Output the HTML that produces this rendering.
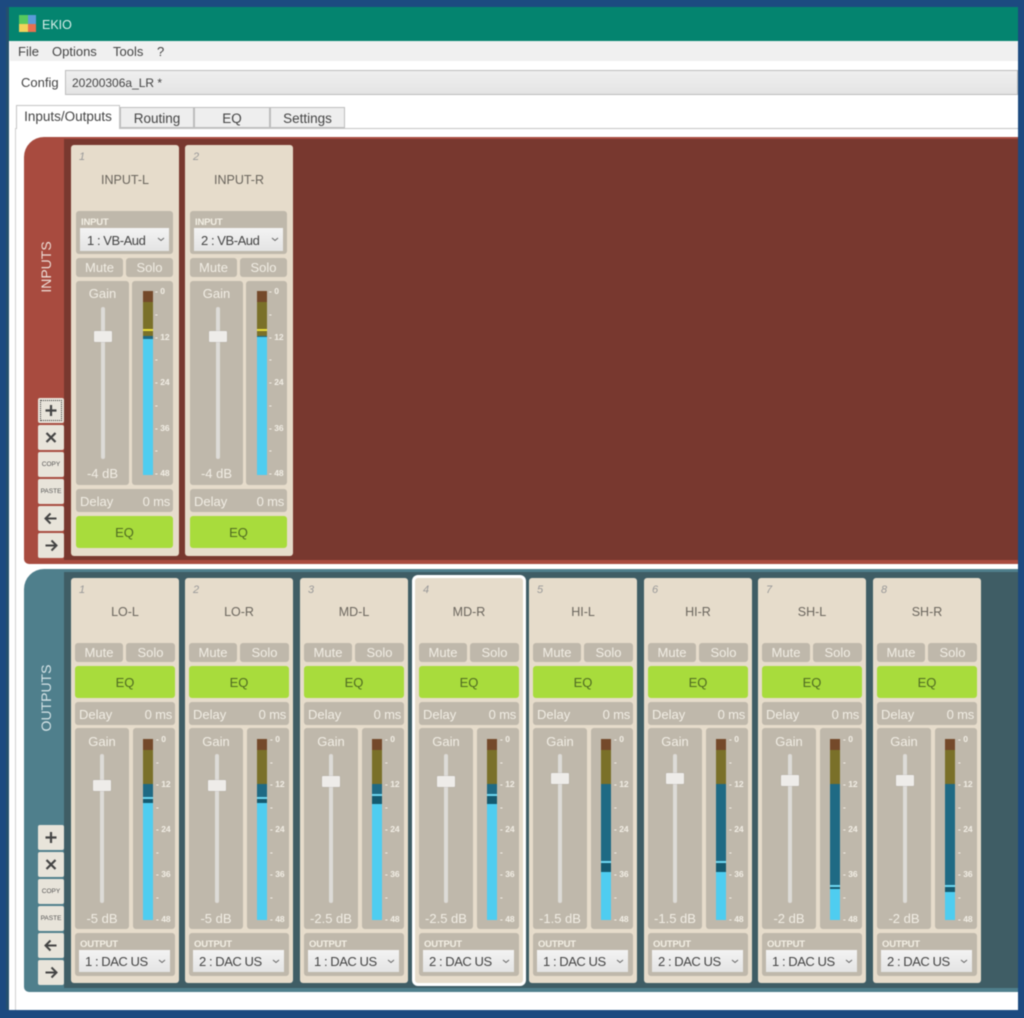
<!DOCTYPE html>
<html><head><meta charset="utf-8"><title>EKIO</title>
<style>
*{box-sizing:border-box}
html,body{margin:0;padding:0;width:1024px;height:1018px;overflow:hidden;background:#1c4a80}
body{font-family:"Liberation Sans",sans-serif;color:#555}
#r{position:absolute;left:0;top:0;width:1024px;height:1018px;overflow:hidden;filter:blur(.4px);background:#1c4a80}
#r div,#r span{position:absolute;white-space:nowrap}
.c{border-radius:3px;background:#e6dccb;width:108px}
.g{background:#bfb8ab;border-radius:3px}
.w{color:#f1ede4;font-size:13px;text-align:center;line-height:19px}
.g.w{line-height:20px}
.g.w span{margin-top:1px;letter-spacing:-.2px}
.g.w span:first-child{font-size:13px!important;letter-spacing:0}
.num{left:8px;top:6px;font:italic 11px "Liberation Sans",sans-serif;color:#999}
.tt{left:0;width:108px;text-align:center;font-size:12.5px;color:#6b665e;line-height:16px;margin-top:1px}
.eq{background:#a8dc3c;border-radius:3px;text-align:center;color:#4f6b22;font-size:13px;line-height:34px}
.sel{background:linear-gradient(#f3f3f3,#e4e4e4);font-size:13px;color:#444;padding:0}
.sel span{margin-top:1px;letter-spacing:-.45px}
.sel svg{position:absolute}
.lab{color:#f3efe4;font-size:9.5px;font-weight:bold;letter-spacing:-.2px;line-height:11px;margin-top:1px}
.tr{width:4px;background:#dddbd7;border-radius:2px}
.th{width:18px;height:11px;background:#eeece9;border-radius:1px;box-shadow:0 0 1px #999}
.bar{width:10px;background:#1f6a84}
.br{left:0;top:0;width:100%;height:11px;background:#74492a}
.ol{left:0;top:11px;width:100%;background:#7a7029}
.bl{left:0;bottom:0;width:100%;background:#4fcdf0}
.pk{left:0;width:100%;height:2px;background:#6fd8f2}
.dk{left:0;width:100%;background:#155a70}
#r .sc{white-space:pre;font-size:8.5px;font-weight:bold;color:#f2eee5;left:23px}
.btn{left:38px;width:26px;height:25px;background:#e8e4da;border-radius:2px}
.btn svg{position:absolute;left:0;top:0}
.sm{font-size:6.5px;color:#555;text-align:center;width:26px;line-height:25px;left:0;top:0}
.tab{top:107px;height:21px;background:#eeeeee;border:1px solid #bdbdbd;text-align:center;font-size:13.5px;color:#444;line-height:21px}
.mn{top:44px;font-size:13px;color:#444;line-height:16px}
</style></head><body><div id="r">

<div style="left:6px;top:7px;width:3px;height:1003px;background:#24506e"></div>
<div style="left:9px;top:7px;width:1009px;height:1003px;background:#fff"></div>
<div style="left:9px;top:7px;width:1009px;height:34px;background:#04846f"></div>
<div style="left:19px;top:15px;width:9px;height:9px;background:#57c95e"></div>
<div style="left:28px;top:15px;width:8px;height:9px;background:#5b9bd8"></div>
<div style="left:19px;top:24px;width:9px;height:8px;background:#f2d35a"></div>
<div style="left:28px;top:24px;width:8px;height:8px;background:#e8704f"></div>
<div style="left:42px;top:17px;font-size:12.5px;color:#d8efea;line-height:16px">EKIO</div>
<div style="left:10px;top:41px;width:1008px;height:20px;background:#f0f0f0"></div>
<div class="mn" style="left:18px">File</div>
<div class="mn" style="left:52px">Options</div>
<div class="mn" style="left:113px">Tools</div>
<div class="mn" style="left:157px">?</div>
<div style="left:21px;top:75px;font-size:13px;color:#444;line-height:16px">Config</div>
<div style="left:65px;top:70px;width:953px;height:25px;background:linear-gradient(#efefef,#e4e4e4);border:1px solid #bdbdbd"></div>
<div style="left:72px;top:75px;font-size:12px;color:#444;line-height:16px">20200306a_LR *</div>

<div style="left:16px;top:128px;width:1002px;height:1px;background:#c4c4c4"></div>
<div style="left:15px;top:128px;width:1px;height:882px;background:#d0d0d0"></div>
<div class="tab" style="left:120px;width:74px">Routing</div>
<div class="tab" style="left:194px;width:76px">EQ</div>
<div class="tab" style="left:270px;width:75px">Settings</div>
<div style="left:16px;top:105px;width:104px;height:24px;background:#fff;border:1px solid #c4c4c4;border-bottom:0;text-align:center;font-size:13.5px;color:#444;line-height:22px">Inputs/Outputs</div>

<!-- INPUTS panel -->
<div style="left:24px;top:137px;width:994px;height:427px;background:#a84b3f;border-radius:20px 0 0 5px"></div>
<div style="left:64px;top:139px;width:954px;height:421px;background:#78382f"></div>
<div style="left:46px;top:267px;transform:translate(-50%,-50%) rotate(-90deg);font-size:14px;color:#ecdcd5;line-height:16px">INPUTS</div>

<div class="btn" style="top:398px;outline:1px dotted #333;outline-offset:-3px"><svg width="26" height="25"><path d="M13 7v11M7.500 12.500h11" stroke="#444" stroke-width="2.200" fill="none"/></svg></div>
<div class="btn" style="top:425px"><svg width="26" height="25"><path d="M8.500 8l9 9M17.500 8l-9 9" stroke="#444" stroke-width="2.200" fill="none"/></svg></div>
<div class="btn" style="top:452px"><span class="sm">COPY</span></div>
<div class="btn" style="top:479px"><span class="sm">PASTE</span></div>
<div class="btn" style="top:506px"><svg width="26" height="25"><path d="M18.500 12.500h-11M12.500 7.500l-5 5 5 5" stroke="#444" stroke-width="2" fill="none"/></svg></div>
<div class="btn" style="top:533px"><svg width="26" height="25"><path d="M7.500 12.500h11M13.500 7.500l5 5-5 5" stroke="#444" stroke-width="2" fill="none"/></svg></div>

<!-- input 1 -->
<div class="c" style="left:71px;top:145px;height:411px">
<div class="num">1</div><div class="tt" style="top:26px">INPUT-L</div>
<div class="g" style="left:5px;top:66px;width:97px;height:43px"></div>
<div class="lab" style="left:10px;top:71px">INPUT</div>
<div class="sel" style="left:9px;top:83px;width:89px;height:23px"><span style="left:7px;top:4px;line-height:15px">1 : VB-Aud</span><svg style="left:77px;top:9px" width="8" height="5"><path d="M1 1l3 2.500L7 1" stroke="#666" fill="none"/></svg></div>
<div class="g w" style="left:5px;top:113px;width:47px;height:19px">Mute</div>
<div class="g w" style="left:55px;top:113px;width:47px;height:19px">Solo</div>
<div class="g" style="left:5px;top:136px;width:53px;height:204px"></div>
<div class="w" style="left:5px;top:139px;width:53px">Gain</div>
<div class="tr" style="left:30px;top:162px;height:152px"></div>
<div class="th" style="left:23px;top:186px"></div>
<div class="w" style="left:5px;top:319px;width:53px">-4 dB</div>
<div class="g" style="left:61px;top:136px;width:41px;height:204px">
<div class="bar" style="left:11px;top:10px;height:184px"><div class="br"></div><div class="ol" style="height:34px"></div><div class="pk" style="top:38px;background:#e8dc3c"></div><div class="bl" style="height:136px"></div></div>
<div class="sc" style="top:-1px;line-height:22.75px">- 0
-
- 12
-
- 24
-
- 36
-
- 48</div></div>
<div class="g w" style="left:5px;top:344px;width:97px;height:23px"><span style="left:4px;top:2px">Delay</span><span style="right:3px;top:2px">0 ms</span></div>
<div class="eq" style="left:5px;top:371px;width:97px;height:32px">EQ</div>
</div>

<!-- input 2 -->
<div class="c" style="left:185px;top:145px;height:411px">
<div class="num">2</div><div class="tt" style="top:26px">INPUT-R</div>
<div class="g" style="left:5px;top:66px;width:97px;height:43px"></div>
<div class="lab" style="left:10px;top:71px">INPUT</div>
<div class="sel" style="left:9px;top:83px;width:89px;height:23px"><span style="left:7px;top:4px;line-height:15px">2 : VB-Aud</span><svg style="left:77px;top:9px" width="8" height="5"><path d="M1 1l3 2.500L7 1" stroke="#666" fill="none"/></svg></div>
<div class="g w" style="left:5px;top:113px;width:47px;height:19px">Mute</div>
<div class="g w" style="left:55px;top:113px;width:47px;height:19px">Solo</div>
<div class="g" style="left:5px;top:136px;width:53px;height:204px"></div>
<div class="w" style="left:5px;top:139px;width:53px">Gain</div>
<div class="tr" style="left:31px;top:162px;height:152px"></div>
<div class="th" style="left:24px;top:186px"></div>
<div class="w" style="left:5px;top:319px;width:53px">-4 dB</div>
<div class="g" style="left:61px;top:136px;width:41px;height:204px">
<div class="bar" style="left:11px;top:10px;height:184px"><div class="br"></div><div class="ol" style="height:34px"></div><div class="pk" style="top:38px;background:#e8dc3c"></div><div class="bl" style="height:138px"></div></div>
<div class="sc" style="top:-1px;line-height:22.75px">- 0
-
- 12
-
- 24
-
- 36
-
- 48</div></div>
<div class="g w" style="left:5px;top:344px;width:97px;height:23px"><span style="left:4px;top:2px">Delay</span><span style="right:3px;top:2px">0 ms</span></div>
<div class="eq" style="left:5px;top:371px;width:97px;height:32px">EQ</div>
</div>

<!-- OUTPUTS panel -->
<div style="left:24px;top:569px;width:994px;height:423px;background:#4f7f8c;border-radius:20px 0 0 5px"></div>
<div style="left:64px;top:572px;width:954px;height:416px;background:#3f5d65"></div>
<div style="left:46px;top:698px;transform:translate(-50%,-50%) rotate(-90deg);font-size:14px;color:#d5e3e6;line-height:16px">OUTPUTS</div>

<div class="btn" style="top:825px"><svg width="26" height="25"><path d="M13 7v11M7.500 12.500h11" stroke="#444" stroke-width="2.200" fill="none"/></svg></div>
<div class="btn" style="top:852px"><svg width="26" height="25"><path d="M8.500 8l9 9M17.500 8l-9 9" stroke="#444" stroke-width="2.200" fill="none"/></svg></div>
<div class="btn" style="top:879px"><span class="sm">COPY</span></div>
<div class="btn" style="top:906px"><span class="sm">PASTE</span></div>
<div class="btn" style="top:933px"><svg width="26" height="25"><path d="M18.500 12.500h-11M12.500 7.500l-5 5 5 5" stroke="#444" stroke-width="2" fill="none"/></svg></div>
<div class="btn" style="top:960px"><svg width="26" height="25"><path d="M7.500 12.500h11M13.500 7.500l5 5-5 5" stroke="#444" stroke-width="2" fill="none"/></svg></div>

<!-- output 1 -->
<div class="c" style="left:71px;top:578px;height:405px">
<div class="num">1</div><div class="tt" style="top:25px">LO-L</div>
<div class="g w" style="left:4px;top:65px;width:48px;height:19px">Mute</div><div class="g w" style="left:55px;top:65px;width:49px;height:19px">Solo</div>
<div class="eq" style="left:4px;top:88px;width:100px;height:32px">EQ</div>
<div class="g w" style="left:4px;top:124px;width:100px;height:23px"><span style="left:4px;top:2px">Delay</span><span style="right:3px;top:2px">0 ms</span></div>
<div class="g" style="left:4px;top:150px;width:54px;height:201px"></div>
<div class="w" style="left:4px;top:154px;width:54px">Gain</div>
<div class="tr" style="left:29px;top:176px;height:149px"></div><div class="th" style="left:22px;top:202px"></div>
<div class="w" style="left:4px;top:331px;width:54px">-5 dB</div>
<div class="g" style="left:62px;top:150px;width:42px;height:201px">
<div class="bar" style="left:10px;top:11px;height:181px"><div class="br"></div><div class="ol" style="height:34px"></div><div class="dk" style="top:60px;height:5px"></div><div class="pk" style="top:58px"></div><div class="bl" style="height:117px"></div></div>
<div class="sc" style="top:0;line-height:22.5px">- 0
-
- 12
-
- 24
-
- 36
-
- 48</div></div>
<div class="g" style="left:4px;top:355px;width:100px;height:43px"></div>
<div class="lab" style="left:9px;top:360px">OUTPUT</div>
<div class="sel" style="left:8px;top:372px;width:91px;height:22px"><span style="left:6px;top:3px;line-height:15px">1 : DAC US</span><svg style="left:79px;top:9px" width="8" height="5"><path d="M1 1l3 2.500L7 1" stroke="#666" fill="none"/></svg></div>
</div>

<!-- output 2 -->
<div class="c" style="left:185px;top:578px;height:405px">
<div class="num">2</div><div class="tt" style="top:25px">LO-R</div>
<div class="g w" style="left:4px;top:65px;width:48px;height:19px">Mute</div><div class="g w" style="left:55px;top:65px;width:49px;height:19px">Solo</div>
<div class="eq" style="left:4px;top:88px;width:100px;height:32px">EQ</div>
<div class="g w" style="left:4px;top:124px;width:100px;height:23px"><span style="left:4px;top:2px">Delay</span><span style="right:3px;top:2px">0 ms</span></div>
<div class="g" style="left:4px;top:150px;width:54px;height:201px"></div>
<div class="w" style="left:4px;top:154px;width:54px">Gain</div>
<div class="tr" style="left:30px;top:176px;height:149px"></div><div class="th" style="left:23px;top:202px"></div>
<div class="w" style="left:4px;top:331px;width:54px">-5 dB</div>
<div class="g" style="left:62px;top:150px;width:42px;height:201px">
<div class="bar" style="left:10px;top:11px;height:181px"><div class="br"></div><div class="ol" style="height:34px"></div><div class="dk" style="top:60px;height:5px"></div><div class="pk" style="top:58px"></div><div class="bl" style="height:117px"></div></div>
<div class="sc" style="top:0;line-height:22.5px">- 0
-
- 12
-
- 24
-
- 36
-
- 48</div></div>
<div class="g" style="left:4px;top:355px;width:100px;height:43px"></div>
<div class="lab" style="left:9px;top:360px">OUTPUT</div>
<div class="sel" style="left:8px;top:372px;width:91px;height:22px"><span style="left:6px;top:3px;line-height:15px">2 : DAC US</span><svg style="left:79px;top:9px" width="8" height="5"><path d="M1 1l3 2.500L7 1" stroke="#666" fill="none"/></svg></div>
</div>

<!-- output 3 -->
<div class="c" style="left:300px;top:578px;height:405px">
<div class="num">3</div><div class="tt" style="top:25px">MD-L</div>
<div class="g w" style="left:4px;top:65px;width:48px;height:19px">Mute</div><div class="g w" style="left:55px;top:65px;width:49px;height:19px">Solo</div>
<div class="eq" style="left:4px;top:88px;width:100px;height:32px">EQ</div>
<div class="g w" style="left:4px;top:124px;width:100px;height:23px"><span style="left:4px;top:2px">Delay</span><span style="right:3px;top:2px">0 ms</span></div>
<div class="g" style="left:4px;top:150px;width:54px;height:201px"></div>
<div class="w" style="left:4px;top:154px;width:54px">Gain</div>
<div class="tr" style="left:29px;top:176px;height:149px"></div><div class="th" style="left:22px;top:198px"></div>
<div class="w" style="left:4px;top:331px;width:54px">-2.5 dB</div>
<div class="g" style="left:62px;top:150px;width:42px;height:201px">
<div class="bar" style="left:10px;top:11px;height:181px"><div class="br"></div><div class="ol" style="height:34px"></div><div class="dk" style="top:57px;height:8px"></div><div class="pk" style="top:55px"></div><div class="bl" style="height:116px"></div></div>
<div class="sc" style="top:0;line-height:22.5px">- 0
-
- 12
-
- 24
-
- 36
-
- 48</div></div>
<div class="g" style="left:4px;top:355px;width:100px;height:43px"></div>
<div class="lab" style="left:9px;top:360px">OUTPUT</div>
<div class="sel" style="left:8px;top:372px;width:91px;height:22px"><span style="left:6px;top:3px;line-height:15px">1 : DAC US</span><svg style="left:79px;top:9px" width="8" height="5"><path d="M1 1l3 2.500L7 1" stroke="#666" fill="none"/></svg></div>
</div>

<!-- output 4 selected -->
<div class="c" style="left:415px;top:578px;height:405px;box-shadow:0 0 0 3px #fff">
<div class="num">4</div><div class="tt" style="top:25px">MD-R</div>
<div class="g w" style="left:4px;top:65px;width:48px;height:19px">Mute</div><div class="g w" style="left:55px;top:65px;width:49px;height:19px">Solo</div>
<div class="eq" style="left:4px;top:88px;width:100px;height:32px">EQ</div>
<div class="g w" style="left:4px;top:124px;width:100px;height:23px"><span style="left:4px;top:2px">Delay</span><span style="right:3px;top:2px">0 ms</span></div>
<div class="g" style="left:4px;top:150px;width:54px;height:201px"></div>
<div class="w" style="left:4px;top:154px;width:54px">Gain</div>
<div class="tr" style="left:29px;top:176px;height:149px"></div><div class="th" style="left:22px;top:198px"></div>
<div class="w" style="left:4px;top:331px;width:54px">-2.5 dB</div>
<div class="g" style="left:62px;top:150px;width:42px;height:201px">
<div class="bar" style="left:10px;top:11px;height:181px"><div class="br"></div><div class="ol" style="height:34px"></div><div class="dk" style="top:57px;height:8px"></div><div class="pk" style="top:55px"></div><div class="bl" style="height:116px"></div></div>
<div class="sc" style="top:0;line-height:22.5px">- 0
-
- 12
-
- 24
-
- 36
-
- 48</div></div>
<div class="g" style="left:4px;top:355px;width:100px;height:43px"></div>
<div class="lab" style="left:9px;top:360px">OUTPUT</div>
<div class="sel" style="left:8px;top:372px;width:91px;height:22px"><span style="left:6px;top:3px;line-height:15px">2 : DAC US</span><svg style="left:79px;top:9px" width="8" height="5"><path d="M1 1l3 2.500L7 1" stroke="#666" fill="none"/></svg></div>
</div>

<!-- output 5 -->
<div class="c" style="left:529px;top:578px;height:405px">
<div class="num">5</div><div class="tt" style="top:25px">HI-L</div>
<div class="g w" style="left:4px;top:65px;width:48px;height:19px">Mute</div><div class="g w" style="left:55px;top:65px;width:49px;height:19px">Solo</div>
<div class="eq" style="left:4px;top:88px;width:100px;height:32px">EQ</div>
<div class="g w" style="left:4px;top:124px;width:100px;height:23px"><span style="left:4px;top:2px">Delay</span><span style="right:3px;top:2px">0 ms</span></div>
<div class="g" style="left:4px;top:150px;width:54px;height:201px"></div>
<div class="w" style="left:4px;top:154px;width:54px">Gain</div>
<div class="tr" style="left:29px;top:176px;height:149px"></div><div class="th" style="left:22px;top:195px"></div>
<div class="w" style="left:4px;top:331px;width:54px">-1.5 dB</div>
<div class="g" style="left:62px;top:150px;width:42px;height:201px">
<div class="bar" style="left:10px;top:11px;height:181px"><div class="br"></div><div class="ol" style="height:34px"></div><div class="dk" style="top:124px;height:9px"></div><div class="pk" style="top:122px"></div><div class="bl" style="height:48px"></div></div>
<div class="sc" style="top:0;line-height:22.5px">- 0
-
- 12
-
- 24
-
- 36
-
- 48</div></div>
<div class="g" style="left:4px;top:355px;width:100px;height:43px"></div>
<div class="lab" style="left:9px;top:360px">OUTPUT</div>
<div class="sel" style="left:8px;top:372px;width:91px;height:22px"><span style="left:6px;top:3px;line-height:15px">1 : DAC US</span><svg style="left:79px;top:9px" width="8" height="5"><path d="M1 1l3 2.500L7 1" stroke="#666" fill="none"/></svg></div>
</div>

<!-- output 6 -->
<div class="c" style="left:644px;top:578px;height:405px">
<div class="num">6</div><div class="tt" style="top:25px">HI-R</div>
<div class="g w" style="left:4px;top:65px;width:48px;height:19px">Mute</div><div class="g w" style="left:55px;top:65px;width:49px;height:19px">Solo</div>
<div class="eq" style="left:4px;top:88px;width:100px;height:32px">EQ</div>
<div class="g w" style="left:4px;top:124px;width:100px;height:23px"><span style="left:4px;top:2px">Delay</span><span style="right:3px;top:2px">0 ms</span></div>
<div class="g" style="left:4px;top:150px;width:54px;height:201px"></div>
<div class="w" style="left:4px;top:154px;width:54px">Gain</div>
<div class="tr" style="left:29px;top:176px;height:149px"></div><div class="th" style="left:22px;top:195px"></div>
<div class="w" style="left:4px;top:331px;width:54px">-1.5 dB</div>
<div class="g" style="left:62px;top:150px;width:42px;height:201px">
<div class="bar" style="left:10px;top:11px;height:181px"><div class="br"></div><div class="ol" style="height:34px"></div><div class="dk" style="top:124px;height:9px"></div><div class="pk" style="top:122px"></div><div class="bl" style="height:48px"></div></div>
<div class="sc" style="top:0;line-height:22.5px">- 0
-
- 12
-
- 24
-
- 36
-
- 48</div></div>
<div class="g" style="left:4px;top:355px;width:100px;height:43px"></div>
<div class="lab" style="left:9px;top:360px">OUTPUT</div>
<div class="sel" style="left:8px;top:372px;width:91px;height:22px"><span style="left:6px;top:3px;line-height:15px">2 : DAC US</span><svg style="left:79px;top:9px" width="8" height="5"><path d="M1 1l3 2.500L7 1" stroke="#666" fill="none"/></svg></div>
</div>

<!-- output 7 -->
<div class="c" style="left:758px;top:578px;height:405px">
<div class="num">7</div><div class="tt" style="top:25px">SH-L</div>
<div class="g w" style="left:4px;top:65px;width:48px;height:19px">Mute</div><div class="g w" style="left:55px;top:65px;width:49px;height:19px">Solo</div>
<div class="eq" style="left:4px;top:88px;width:100px;height:32px">EQ</div>
<div class="g w" style="left:4px;top:124px;width:100px;height:23px"><span style="left:4px;top:2px">Delay</span><span style="right:3px;top:2px">0 ms</span></div>
<div class="g" style="left:4px;top:150px;width:54px;height:201px"></div>
<div class="w" style="left:4px;top:154px;width:54px">Gain</div>
<div class="tr" style="left:30px;top:176px;height:149px"></div><div class="th" style="left:23px;top:197px"></div>
<div class="w" style="left:4px;top:331px;width:54px">-2 dB</div>
<div class="g" style="left:62px;top:150px;width:42px;height:201px">
<div class="bar" style="left:10px;top:11px;height:181px"><div class="br"></div><div class="ol" style="height:34px"></div><div class="dk" style="top:148px;height:3px"></div><div class="pk" style="top:146px"></div><div class="bl" style="height:31px"></div></div>
<div class="sc" style="top:0;line-height:22.5px">- 0
-
- 12
-
- 24
-
- 36
-
- 48</div></div>
<div class="g" style="left:4px;top:355px;width:100px;height:43px"></div>
<div class="lab" style="left:9px;top:360px">OUTPUT</div>
<div class="sel" style="left:8px;top:372px;width:91px;height:22px"><span style="left:6px;top:3px;line-height:15px">1 : DAC US</span><svg style="left:79px;top:9px" width="8" height="5"><path d="M1 1l3 2.500L7 1" stroke="#666" fill="none"/></svg></div>
</div>

<!-- output 8 -->
<div class="c" style="left:873px;top:578px;height:405px">
<div class="num">8</div><div class="tt" style="top:25px">SH-R</div>
<div class="g w" style="left:4px;top:65px;width:48px;height:19px">Mute</div><div class="g w" style="left:55px;top:65px;width:49px;height:19px">Solo</div>
<div class="eq" style="left:4px;top:88px;width:100px;height:32px">EQ</div>
<div class="g w" style="left:4px;top:124px;width:100px;height:23px"><span style="left:4px;top:2px">Delay</span><span style="right:3px;top:2px">0 ms</span></div>
<div class="g" style="left:4px;top:150px;width:54px;height:201px"></div>
<div class="w" style="left:4px;top:154px;width:54px">Gain</div>
<div class="tr" style="left:30px;top:176px;height:149px"></div><div class="th" style="left:23px;top:197px"></div>
<div class="w" style="left:4px;top:331px;width:54px">-2 dB</div>
<div class="g" style="left:62px;top:150px;width:42px;height:201px">
<div class="bar" style="left:10px;top:11px;height:181px"><div class="br"></div><div class="ol" style="height:34px"></div><div class="dk" style="top:148px;height:6px"></div><div class="pk" style="top:146px"></div><div class="bl" style="height:28px"></div></div>
<div class="sc" style="top:0;line-height:22.5px">- 0
-
- 12
-
- 24
-
- 36
-
- 48</div></div>
<div class="g" style="left:4px;top:355px;width:100px;height:43px"></div>
<div class="lab" style="left:9px;top:360px">OUTPUT</div>
<div class="sel" style="left:8px;top:372px;width:91px;height:22px"><span style="left:6px;top:3px;line-height:15px">2 : DAC US</span><svg style="left:79px;top:9px" width="8" height="5"><path d="M1 1l3 2.500L7 1" stroke="#666" fill="none"/></svg></div>
</div>

</div></body></html>
